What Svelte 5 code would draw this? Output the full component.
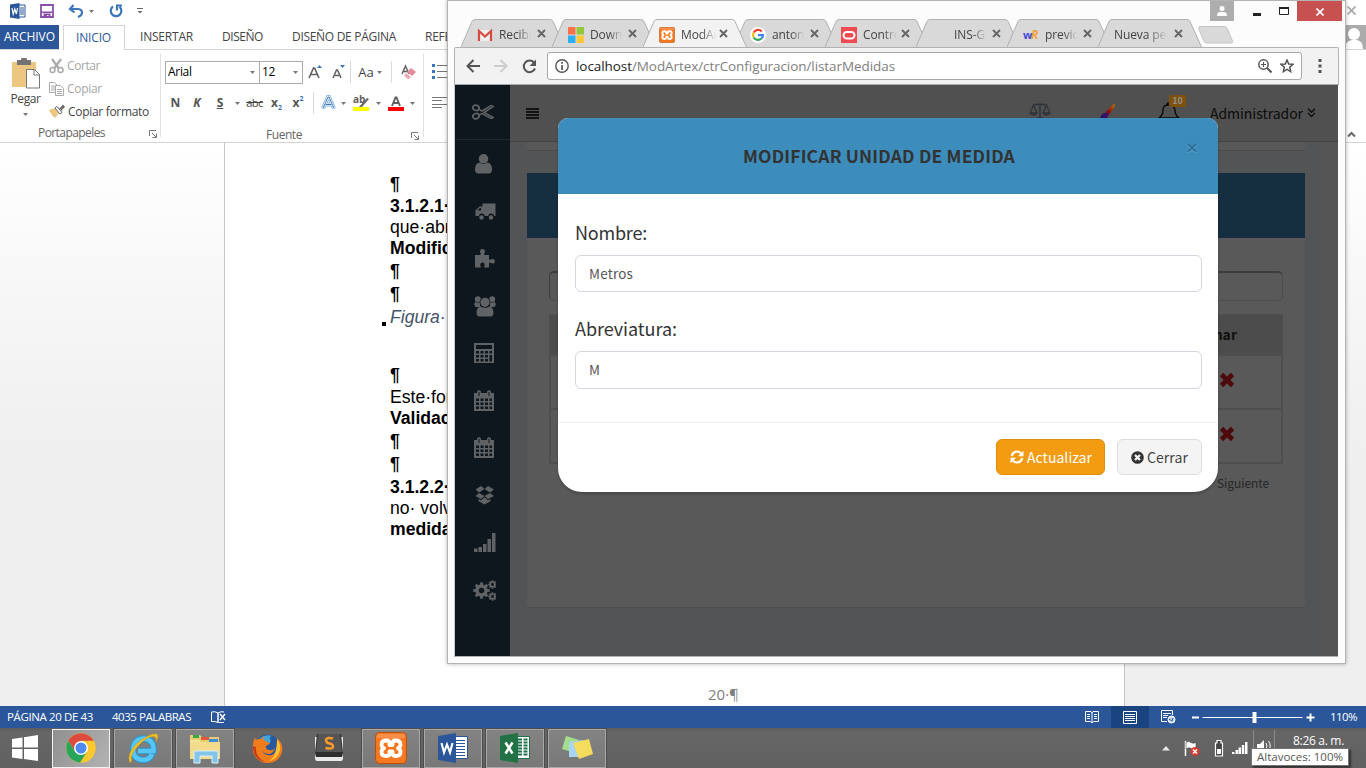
<script>
  // Spreads a label over a fixed width by adjusting its tracking.
  function fit(node, width) {
    const natural = node.getBoundingClientRect().width;
    const count = node.textContent.length;
    node.style.letterSpacing = (width - natural) / count + 'px';
  }

  const ribbonTabs = [
    { label: 'INSERTAR', gap: 15, w: 53 },
    { label: 'DISEÑO', gap: 29, w: 41 },
    { label: 'DISEÑO DE PÁGINA', gap: 29, w: 104 },
    { label: 'REFE', gap: 29, w: 26 }
  ];

  const lines = [
    { t: '¶', h: 22, k: 'b' },
    { t: '3.1.2.1·Modificar', h: 22, k: 'b' },
    { t: 'que·abre', h: 20 },
    { t: 'Modificar', h: 22, k: 'b' },
    { t: '¶', h: 24, k: 'b' },
    { t: '¶', h: 23, k: 'b' },
    { t: 'Figura·', h: 22, k: 'fig' },
    { t: '', h: 36 },
    { t: '¶', h: 22, k: 'b' },
    { t: 'Este·formulario', h: 22 },
    { t: 'Validación', h: 21, k: 'b' },
    { t: '¶', h: 24, k: 'b' },
    { t: '¶', h: 23, k: 'b' },
    { t: '3.1.2.2·Modificar', h: 22, k: 'b' },
    { t: 'no· volverá', h: 21 },
    { t: 'medida', h: 21, k: 'b' }
  ];

  const tabs = [
    { icon: 'gmail', label: 'Recibi', w: 34 },
    { icon: 'ms', label: 'Downl', w: 34 },
    { icon: 'xampp', label: 'ModAr', w: 37, active: true },
    { icon: 'google', label: 'antoni', w: 34 },
    { icon: 'oracle', label: 'Contro', w: 36 },
    { icon: 'none', label: 'INS-G', w: 34 },
    { icon: 'wr', label: 'previo', w: 34 },
    { icon: '', label: 'Nueva pes', w: 56 }
  ];

  const menu = ['user', 'truck', 'puzzle', 'users', 'calc', 'cal', 'cal', 'dropbox', 'signal', 'cogs'];
  const tasks = [
    { n: 'chrome', s: 'on' },
    { n: 'ie', s: 'open' },
    { n: 'folder', s: 'open' },
    { n: 'firefox', s: '' },
    { n: 'sublime', s: '' },
    { n: 'xampp', s: 'open' },
    { n: 'word', s: 'open' },
    { n: 'excel', s: 'open' },
    { n: 'notes', s: 'open' }
  ];
  const teeth = [0, 45, 90, 135, 180, 225, 270, 315];
</script>

{#snippet arrow(c = '#777')}
  <svg width="5" height="3" viewBox="0 0 5 3"><path d="M0 0h5L2.5 3z" fill={c} /></svg>
{/snippet}

{#snippet launcher()}
  <svg width="8" height="8" viewBox="0 0 8 8" fill="none" stroke="#777"><path d="M.5 6V.5H7M3 3l4 4M7.5 3.500V7.500H3.500" /></svg>
{/snippet}

{#snippet xampp(size)}
  <svg width={size} height={size} viewBox="0 0 32 32">
    <rect x=".5" y=".5" width="31" height="31" rx="4" fill="#f57820" stroke="#b9500f" />
    <path d="M2 2h28v4q-14 2-28 0z" fill="#f9a36a" opacity=".55" />
    <path d="M11.500 8.500q-5 0-5 4 0 2.500 2.500 3.800-2.500 1.300-2.500 3.700 0 4 5 4 3 0 3-3v-1.500h3V21q0 3 3 3 5 0 5-4 0-2.400-2.500-3.700 2.500-1.300 2.500-3.800 0-4-5-4-3 0-3 3V13h-3v-1.500q0-3-3-3z" fill="none" stroke="#fff" stroke-width="3.800" stroke-linejoin="round" />
  </svg>
{/snippet}

{#snippet cog(cx, cy, r)}
  <g transform="translate({cx} {cy})">
    {#each teeth as a}<rect x={-r * 0.22} y={-r * 1.28} width={r * 0.44} height={r * 0.5} transform="rotate({a})" fill="#606365" />{/each}
    <circle r={r * 0.7} fill="none" stroke="#606365" stroke-width={r * 0.55} />
  </g>
{/snippet}

{#snippet side(n)}
  <svg width="24" height="24" viewBox="0 0 24 24" fill="#606365">
    {#if n === 'user'}
      <circle cx="11.500" cy="6.800" r="4.800" /><path d="M7.500 10.500q4 3 8 0 4.500 1 4.500 7 0 4-3.500 4h-10Q3 21.500 3 17.500q0-6 4.500-7z" />
    {:else if n === 'truck'}
      <g transform="translate(-.5 1)"><path d="M11 3.500h13V16h-1.200a3.200 3.200 0 0 0-6.200 0h-3.200a3.200 3.200 0 0 0-6.200 0H4v-5.500l4-4h3z" /><path d="M6 10.500h3.500V8H8.300z" fill="#0e171e" /><circle cx="10" cy="17.500" r="2.200" /><circle cx="19.500" cy="17.500" r="2.200" /></g>
    {:else if n === 'puzzle'}
      <path d="M3 9h5.300q.9-1.200-.1-2.600Q7.500 3 10.500 3t2.300 3.400Q11.500 8 12.700 9H17v4.200q1 1.200 2.500 0 3.400-1 3.400 2t-3.400 2q-1.500-1.200-2.500 0V21.500h-4.500q-.8-.8.100-2Q13 16.500 10.500 16.500T8.300 19.500q1 1.200.2 2H3z" />
    {:else if n === 'users'}
      <circle cx="5.800" cy="5.300" r="3" /><circle cx="20.200" cy="5.300" r="3" /><path d="M3.500 8q2.500 1.500 5 0-1 2.500 0 5h-5q-2.500-3 0-5zM22.500 8q-2.500 1.500-5 0 1 2.500 0 5h5q2.500-3 0-5z" /><circle cx="13" cy="8.300" r="5.300" fill="#0e171e" /><circle cx="13" cy="8.300" r="4.600" /><path d="M8.500 12.500q4.500 2.500 9 0 4 1 4 6 0 4-3 4h-11q-3 0-3-4 0-5 4-6z" />
    {:else if n === 'calc'}
      <path d="M2 2h20v20H2z" /><path d="M4 4h16v4H4zM4 10h3v2.500H4zM8.500 10h3v2.500h-3zM13 10h3v2.500h-3zM17.500 10h2.500v2.500h-2.500zM4 14h3v2.500H4zM8.500 14h3v2.500h-3zM13 14h3v2.500h-3zM17.500 14H20v6.500h-2.500zM4 18h3v2.500H4zM8.500 18h3v2.500h-3zM13 18h3v2.500h-3z" fill="#0e171e" />
    {:else if n === 'cal'}
      <path d="M2 4h3V2.500Q7 0 9 2.500V4h6V2.500Q17 0 19 2.500V4h3v18H2z" /><path d="M6.500 3h1v4h-1zM16.500 3h1v4h-1zM4 9.500h3V12H4zM8.500 9.500h3V12h-3zM13 9.500h3V12h-3zM17.500 9.500H20V12h-2.500zM4 13.500h3V16H4zM8.500 13.500h3V16h-3zM13 13.500h3V16h-3zM17.500 13.500H20V16h-2.500zM4 17.500h3V20H4zM8.500 17.500h3V20h-3zM13 17.500h3V20h-3zM17.500 17.500H20V20h-2.500z" fill="#0e171e" />
    {:else if n === 'dropbox'}
      <path d="M8.500 3L12 6l-5.500 3.500L3 6.500zM15.500 3L12 6l5.500 3.500 4-3zM6.500 10L12 13l-3.500 3L3 13zM17.500 10L12 13l3.500 3 6-3zM12 14.200l3.500 3L18 16v2.200L12 21.500l-6-3.300V16l2.500 1.200z" transform="translate(.5 0)" />
    {:else if n === 'signal'}
      <path d="M2 17.500h3.500V21H2zM6.500 16H10v5H6.500zM11 13h3.500v8H11zM15.500 8H19v13h-3.500zM20 2h3.500v19H20z" />
    {:else}
      {@render cog(9.5, 12.5, 6.4)}{@render cog(20.5, 6.5, 3.4)}{@render cog(20.5, 18.5, 3.4)}
    {/if}
  </svg>
{/snippet}

<div class="desktop">
  <div class="word">
    <div class="qat">
      <svg width="16" height="16" viewBox="0 0 16 16"><path d="M8 2h7v12H8z" fill="#fff" stroke="#2b579a" /><path d="M10 5h4M10 7h4M10 9h4M10 11h4" stroke="#2b579a" /><path d="M0 1.500L9.500 0v16L0 14.500z" fill="#2b579a" /><path d="M2 5l1.200 6L4.800 6l1.600 5L7.500 5" fill="none" stroke="#fff" stroke-width="1.200" /></svg>
      <svg class="m-save" width="14" height="14" viewBox="0 0 14 14"><path d="M1 1h12v12H1z" fill="#fff" stroke="#8a4fab" stroke-width="1.800" /><path d="M1 7.500h12V9H1zM3.500 9.500h7V13h-2v-2H7v2H3.500z" fill="#8a4fab" /></svg>
      <svg class="m-undo" width="16" height="14" viewBox="0 0 16 14"><path d="M5.500 1L2 5l4.500 3.500M2.500 5H10q4 .3 4 3.500 0 3-4 4.500" fill="none" stroke="#3a76b8" stroke-width="2.200" /></svg>
      <span class="m-a">{@render arrow()}</span>
      <svg class="m-redo" width="15" height="14" viewBox="0 0 15 14"><path d="M4 2.500a5.300 5.300 0 1 0 6.500.3M8 6.500V1.500H13" fill="none" stroke="#3a76b8" stroke-width="2.200" /></svg>
      <svg class="m-more" width="6" height="6" viewBox="0 0 6 6"><path d="M0 .5h6" stroke="#666" /><path d="M.5 3h5L3 5.500z" fill="#666" /></svg>
    </div>
    <div class="rtabs">
      <div class="file"><span use:fit={51}>ARCHIVO</span></div>
      <div class="home"><span use:fit={35}>INICIO</span></div>
      <div class="rest">
        {#each ribbonTabs as t}
          <span class="rt" style="margin-left:{t.gap}px" use:fit={t.w}>{t.label}</span>
        {/each}
        <svg class="face" width="21" height="24" viewBox="0 0 21 24"><path d="M0 0h21v24H0z" fill="#ababab" /><circle cx="9" cy="9" r="6" fill="#fff" /><path d="M0 24q0-8 7-9h5q6 1 6 9z" fill="#fff" /></svg>
      </div>
    </div>
    <div class="ribbon">
      <div class="group clip">
        <div class="clipbody">
          <div class="paste">
            <svg width="30" height="32" viewBox="0 0 30 32"><path d="M1 4h24v25H1z" fill="#edc681" /><path d="M6 2h4q0-3 3-3t3 3h4v5H6z" fill="#737373" /><path d="M15.500 11.500h8l5 5V30h-13z" fill="#fff" stroke="#777" /><path d="M23 11.500V17h5.500" fill="none" stroke="#777" /></svg>
            <span use:fit={30}>Pegar</span>
            {@render arrow()}
          </div>
          <div class="cmds">
            <div class="cmd off">
              <svg width="15" height="16" viewBox="0 0 15 16" fill="none" stroke="#aaa" stroke-width="1.500"><path d="M3 1l6.500 9M12 1L5.500 10" stroke-width="2.200" /><circle cx="3.500" cy="12" r="2.500" /><circle cx="11.500" cy="12" r="2.500" /></svg>
              <span use:fit={33}>Cortar</span>
            </div>
            <div class="cmd off">
              <svg width="15" height="14" viewBox="0 0 15 14" fill="#fff" stroke="#aaa"><path d="M.5.5h5l3 3v7h-8zM2 4h4M2 6h4M2 8h4" /><path d="M6.500 3.500h5l3 3v7h-8zM8 7.500h5M8 9.500h5M8 11.500h5" /></svg>
              <span use:fit={35}>Copiar</span>
            </div>
            <div class="cmd">
              <svg width="16" height="15" viewBox="0 0 16 15"><path d="M0 6l6-2 4 5-4 5q-4-3-6-8z" fill="#edc681" /><path d="M6 4l2-1.500 5 6L11 10z" fill="#fff" stroke="#666" /><path d="M9 3l2 1 3-3.500L16 3l-3 2.500.5 2z" fill="#666" /></svg>
              <span use:fit={81}>Copiar formato</span>
            </div>
          </div>
        </div>
        <div class="gname"><span class="g1" use:fit={67}>Portapapeles</span><span class="l1">{@render launcher()}</span></div>
      </div>
      <div class="group font">
        <div class="frow">
          <div class="sel name"><span>Arial</span>{@render arrow()}</div>
          <div class="sel size"><span>12</span>{@render arrow()}</div>
          <div class="c" style="width:25px"><svg width="15" height="16" viewBox="0 0 15 16"><path d="M1 14L5.500 4h1L11 14M3 10.500h6" fill="none" stroke="#5f5f5f" stroke-width="1.600" /><path d="M9 4h5l-2.500-3z" fill="#3a76b8" /></svg></div>
          <div class="c" style="width:21px"><svg width="14" height="16" viewBox="0 0 14 16"><path d="M1 14l3.500-8h1L9 14M3 11.500h4" fill="none" stroke="#5f5f5f" stroke-width="1.500" /><path d="M8 1h5l-2.500 3z" fill="#3a76b8" /></svg></div>
          <div class="vs"></div>
          <div class="c big" style="width:26px">Aa</div>
          <div class="c" style="width:5px">{@render arrow()}</div>
          <div class="vs vs2"></div>
          <div class="c" style="width:24px"><svg width="15" height="16" viewBox="0 0 15 16"><path d="M1 10L4.500 2 8 10M2 7.500h5" fill="none" stroke="#5f5f5f" stroke-width="1.400" /><path d="M10 4l5 4-4 4-5-4z" fill="#e58a9b" /><path d="M5 9l5 4-3 2.500-4-4z" fill="#f0a9b6" /></svg></div>
        </div>
        <div class="frow r2">
          <div class="c b" style="width:21px">N</div>
          <div class="c b i" style="width:22px">K</div>
          <div class="c b u" style="width:24px">S</div>
          <div class="c" style="width:11px">{@render arrow()}</div>
          <div class="c abc" style="width:23px"><s>abc</s></div>
          <div class="c b" style="width:21px">x<sub>2</sub></div>
          <div class="c b" style="width:22px">x<sup>2</sup></div>
          <div class="c" style="width:8px"><i class="bar"></i></div>
          <div class="c" style="width:23px"><svg width="15" height="16" viewBox="0 0 15 16" fill="none"><path d="M2 13.500L7 2h1l5 11.500M4.500 9.500h6" stroke="#8db7e2" stroke-width="4" /><path d="M2 13.500L7 2h1l5 11.500M4.500 9.500h6" stroke="#fff" stroke-width="2" /><path d="M2 13.500L7 2h1l5 11.500M4.500 9.500h6" stroke="#2b6cb0" stroke-width=".9" /></svg></div>
          <div class="c" style="width:7px">{@render arrow()}</div>
          <div class="c" style="width:28px"><svg class="vis" width="17" height="17" viewBox="0 0 17 17"><text x="0" y="8" font-size="10" font-weight="700" font-family="Open Sans" fill="#5f5f5f">ab</text><path d="M14 3l2 1-7 8-4 1z" fill="#6a6a6a" /><path d="M0 12h16v4H0z" fill="#ff0" /></svg></div>
          <div class="c" style="width:7px">{@render arrow()}</div>
          <div class="c" style="width:27px"><svg width="16" height="17" viewBox="0 0 16 17"><path d="M4 11L7.500 2.500h1L12 11M5.500 8h5" fill="none" stroke="#5f5f5f" stroke-width="1.900" /><path d="M0 12h16v4H0z" fill="red" /></svg></div>
          <div class="c" style="width:7px">{@render arrow()}</div>
        </div>
        <div class="gname"><span class="g2" use:fit={36}>Fuente</span><span class="l2">{@render launcher()}</span></div>
      </div>
      <div class="group para">
        <svg width="16" height="50" viewBox="0 0 16 50"><path d="M0 1h3v3H0zM0 7h3v3H0zM0 13h3v3H0z" fill="#3a76b8" /><path d="M5 2.500h11M5 8.500h11M5 14.500h11M0 34.500h16M0 37.500h10M0 41.500h16M0 44.500h10" stroke="#777" /></svg>
      </div>
      <svg class="collapse" width="9" height="7" viewBox="0 0 9 7"><path d="M1 5.500l3.500-3.500L8 5.500" fill="none" stroke="#666" stroke-width="2" /></svg>
    </div>
    <div class="canvas">
      <div class="sheet">
        {#each lines as l}
          <div class="ln {l.k ?? ''}" style="height:{l.h}px;line-height:{l.h}px">{l.t}</div>
        {/each}
        <div class="pageno">20·¶</div>
      </div>
    </div>
    <div class="status">
      <span class="s1" use:fit={86}>PÁGINA 20 DE 43</span>
      <span class="s2" use:fit={79}>4035 PALABRAS</span>
      <svg class="s3" width="15" height="13" viewBox="0 0 15 13" fill="none" stroke="#fff"><path d="M7 2q-3-2-6.500-1v9.500Q4 10 7 11.500zM7 2q3-2 6-1M7 12V2M8 11.500h5" /><path d="M9 3l5 6M14 3L9 9" stroke-width="1.400" /></svg>
      <div class="views">
        <div class="v"><svg width="14" height="13" viewBox="0 0 14 13" fill="none" stroke="#fff"><path d="M.5.5H6L7 2l1-1.500h5.500v10H8.500L7 12l-1.500-1.500h-5zM7 2v10M2 3.500h3M2 5.500h3M2 7.500h3M9 3.500h3M9 5.500h3M9 7.500h3" /></svg></div>
        <div class="v cur"><svg width="14" height="13" viewBox="0 0 14 13" fill="none" stroke="#fff"><path d="M.5.5h13v12H.5zM2 3.500h10M2 5.500h10M2 7.500h10M2 9.500h10" /></svg></div>
        <div class="v"><svg width="15" height="14" viewBox="0 0 15 14" fill="none" stroke="#fff"><path d="M11.500 5V.5H.5v11H6M2 3.500h8M2 5.500h5M2 7.500h4" /><circle cx="10.500" cy="9.500" r="3.500" fill="#c9d8ee" /><path d="M8 9l3 2 1-3" stroke="#2b579a" /></svg></div>
      </div>
      <svg class="zoom" width="124" height="12" viewBox="0 0 124 12"><path d="M0 6.500h7" stroke="#fff" stroke-width="2" /><path d="M10.500 6.500h100" stroke="#fff" /><path d="M60.500 1h4v11h-4z" fill="#fff" /><path d="M114.500 6.500h8M118.500 2.500v8" stroke="#fff" stroke-width="2" /></svg>
      <span class="pct" use:fit={27}>110%</span>
    </div>
  </div>

  <div class="taskbar">
    <svg class="start" width="28" height="26" viewBox="0 0 28 26"><path d="M1 4l10.500-1.500v10H1zM13 2.300L27 0v12.500H13zM1 14h10.500v10L1 22.500zM13 14h14v12l-14-2z" fill="#fff" /></svg>
    <div class="tasks">
      {#each tasks as t}
        <div class="task {t.s}">
          {#if t.n === 'xampp'}
            {@render xampp(32)}
          {:else}
            <svg width="32" height="32" viewBox="0 0 32 32">
              {#if t.n === 'chrome'}
                <circle cx="16" cy="16" r="14.700" fill="#fbc92e" />
                <path d="M3.300 8.600A14.700 14.700 0 0 1 28.700 8.700H16L10 19.500z" fill="#dc4b3e" />
                <path d="M3.300 8.600A14.700 14.700 0 0 0 15 30.700L22 19.500H10z" fill="#27a65a" />
                <circle cx="16" cy="16" r="7" fill="#fff" /><circle cx="16" cy="16" r="5.500" fill="#4f8af0" />
              {:else if t.n === 'ie'}
                <path d="M25 22q-2 6-9 6Q6 27 6 17.500 7 7 17 6.500 27 7.500 26.500 19H11" fill="none" stroke="#2b93d1" stroke-width="6.500" />
                <path d="M25 22q-2 6-9 6Q6 27 6 17.500 7 7 17 6.500 27 7.500 26.500 19H11" fill="none" stroke="#58c6f2" stroke-width="4.500" />
                <path d="M3 31Q-1 22 10 11.500 22 1 30 2q2 2-1 8 1-5-2-5.500Q20 4 11 14 2 24 5 28z" fill="#f2c321" stroke="#cf9b14" stroke-width=".5" />
              {:else if t.n === 'folder'}
                <path d="M1 3h10l2 2h17v22H1z" fill="#eacb6e" /><path d="M4 3h6v3H4z" fill="#37a849" /><path d="M12 5h8v3h-8z" fill="#e3583c" /><path d="M20 7h9v3h-9z" fill="#3c8ed6" /><path d="M1 8h9l2 2h19v17H1z" fill="#f7e39b" /><path d="M1 10h30v17H1z" fill="#f3db8c" /><path d="M5 31V19h24v12h-6v-7H11v7z" fill="#83c4e8" stroke="#d9f1fb" />
              {:else if t.n === 'firefox'}
                <circle cx="16.500" cy="15" r="12.500" fill="#28599e" /><path d="M9 6q6-4 12-2-3 1-2 3 2 3-2 5z" fill="#42a5da" />
                <path d="M4 5q0 2 1 3 3-2 6-1 0-2 2-3-1 4 1 5l5 2q-1 2-4 3-1 3 3 4 4 1 6-2-1 5-6 6-7 0-8-7 2 10 11 8 8-3 5-17 8 7 4 17-5 9-15 8-10-2-13-11-1-9 2-15z" fill="#f07c1c" /><path d="M26 7q6 8 1 16-3 5-9 6 8-5 8-22z" fill="#fbc236" /><path d="M2 14q0 14 12 16-10-5-9-15z" fill="#c93a1a" />
              {:else if t.n === 'sublime'}
                <path d="M2 5h28v21q0 3-2 3H4q-2 0-2-3z" fill="#e9e9e9" /><path d="M4 2h24l2 19-1 4H3l-1-4z" fill="#2e2e2e" /><path d="M5 2h22l2 18H3z" fill="#555" /><path d="M20 6.500Q13 5 13 8t3.500 3.500T20 14.500Q20 17.500 12.500 16" fill="none" stroke="#ff9b2b" stroke-width="2.500" />
              {:else if t.n === 'word' || t.n === 'excel'}
                <path d="M16 4.500h14.500v22H16z" fill="#fff" stroke={t.n === 'word' ? '#2b579a' : '#217346'} />
                {#if t.n === 'word'}
                  <path d="M18 8.500h10M18 11.500h10M18 14.500h10M18 17.500h10M18 20.500h10M18 23.500h10" stroke="#2b579a" stroke-width="1.200" />
                {:else}
                  <path d="M19 7.500h4M24.500 7.500h4M19 10.500h4M24.500 10.500h4M19 13.500h4M24.500 13.500h4M19 16.500h4M24.500 16.500h4M19 19.500h4M24.500 19.500h4M19 22.500h4M24.500 22.500h4" stroke="#217346" stroke-width="1.800" />
                {/if}
                <path d="M1 4L19 1v30L1 28z" fill={t.n === 'word' ? '#2b579a' : '#217346'} />
                {#if t.n === 'word'}
                  <path d="M4.500 11L7 20.500 10 12.500 13 20.500 15.500 11" fill="none" stroke="#fff" stroke-width="2.100" />
                {:else}
                  <path d="M6.500 10.500l7 11M13.500 10.500l-7 11" stroke="#fff" stroke-width="2.500" />
                {/if}
              {:else}
                <path d="M5 4l13 4-4 13-13-4z" fill="#a4dd8d" /><path d="M8 10l14-2 1 17H8z" fill="#a9d5f5" /><path d="M12 11l16-4 4 15-14 5z" fill="#f5dc5c" />
              {/if}
            </svg>
          {/if}
        </div>
      {/each}
    </div>
    <div class="tray">
      <svg width="8" height="5" viewBox="0 0 8 5"><path d="M0 4.500h8L4 0z" fill="#e8e8e8" /></svg>
      <svg class="t-flag" width="17" height="17" viewBox="0 0 17 17"><path d="M1.500 1v15" stroke="#fff" stroke-width="1.500" /><path d="M2 2q3-1 5 .5t5 0V9q-3 1-5-.5T2 9z" fill="#fff" stroke="#444" stroke-width=".6" /><circle cx="11" cy="11.500" r="4.500" fill="#dc3b31" /><path d="M9 9.500l4 4M13 9.500l-4 4" stroke="#fff" stroke-width="1.500" /></svg>
      <svg class="t-bat" width="10" height="17" viewBox="0 0 10 17"><path d="M3 .5h4V3h1.500v13h-7V3H3z" fill="#444" stroke="#fff" stroke-width="1.200" /><path d="M3 9h4v5H3z" fill="#fff" /></svg>
      <svg class="t-net" width="16" height="14" viewBox="0 0 16 14"><path d="M0 11h2.500v2H0zM3.500 9H6v4H3.500zM6.500 6.500H9V13H6.500zM9.800 4h2.500v9H9.800zM13 1h2.500v12H13z" fill="#fff" /></svg>
      <div class="spk"><svg width="16" height="12" viewBox="0 0 16 12"><path d="M1 4h3l4-4v12L4 8H1z" fill="#fff" /><path d="M10 3q2 3 0 6M12.500 1q3.500 5 0 10" fill="none" stroke="#fff" /></svg></div>
      <span class="clock" use:fit={51}>8:26 a. m.</span>
    </div>
  </div>

  <div class="browser">
    <div class="strip">
      <div class="tabs">
        {#each tabs as t}
          <div class="tab" class:active={t.active}>
            <svg class="shape" width="104" height="29" viewBox="0 0 104 29"><path d="M0 28L11 2.500Q12 .5 14 .5h75q2 0 3 2L103.500 28" fill={t.active ? '#f2f2f2' : '#d9d9d9'} stroke="#b1b1b1" /></svg>
            <div class="tabin">
              {#if t.icon === 'xampp'}
                {@render xampp(16)}
              {:else if t.icon}
                <svg width="16" height="16" viewBox="0 0 16 16">
                  {#if t.icon === 'gmail'}
                    <path d="M1 3h14v11H1z" fill="#eee" /><path d="M2 14V4l6 5.500L14 4v10" fill="none" stroke="#d54b3d" stroke-width="2.200" />
                  {:else if t.icon === 'ms'}
                    <path d="M0 0h7.500v7.500H0z" fill="#f8714b" /><path d="M8.500 0H16v7.500H8.500z" fill="#93c83d" /><path d="M0 8.500h7.500V16H0z" fill="#2db1ee" /><path d="M8.500 8.500H16V16H8.500z" fill="#fdc73a" />
                  {:else if t.icon === 'google'}
                    <circle cx="8" cy="8" r="8" fill="#fff" /><g fill="none" stroke-width="2.200"><path d="M11.800 4.500A5 5 0 0 0 3.700 5.500" stroke="#ea4335" /><path d="M3.700 5.500a5 5 0 0 0 0 5" stroke="#fbbc05" /><path d="M3.700 10.500a5 5 0 0 0 7.800 1" stroke="#34a853" /><path d="M11.500 11.500A5 5 0 0 0 13 8.100H8" stroke="#4285f4" /></g>
                  {:else if t.icon === 'oracle'}
                    <path d="M0 0h16v16H0z" fill="#ef4b50" /><rect x="2.500" y="5" width="11" height="6.500" rx="3.200" fill="none" stroke="#fff" stroke-width="2" />
                  {:else if t.icon === 'wr'}
                    <text x="0" y="12" font-size="11" font-weight="700" font-family="Open Sans" fill="#4447d6">w</text><text x="8" y="12" font-size="12" font-weight="700" font-style="italic" font-family="Open Sans" fill="#efa33a">R</text>
                  {/if}
                </svg>
              {/if}
              <span class="tl" style="width:{t.w - 2}px;margin-left:{t.icon ? 6 : 0}px">{t.label}</span>
              <svg class="tx" width="9" height="9" viewBox="0 0 9 9"><path d="M1 1l7 7M8 1L1 8" stroke="#666" stroke-width="1.900" /></svg>
            </div>
          </div>
        {/each}
      </div>
      <svg class="newtab" width="36" height="18" viewBox="0 0 36 18"><path d="M1.500.5h25q2 0 3 2.500l5 12q.8 2-1.500 2H9q-2.500 0-3.500-2.500L1 3Q0 .5 1.500.5z" fill="#d9d9d9" stroke="#c4c4c4" /></svg>
      <div class="wbtns">
        <div class="who"><svg width="10" height="10" viewBox="0 0 10 10" fill="#fff"><circle cx="5" cy="2.500" r="2.500" /><path d="M0 10q0-4 3-4h4q3 0 3 4z" /></svg></div>
        <svg class="min" width="8" height="3" viewBox="0 0 8 3"><path d="M0 0h8v3H0z" fill="#222" /></svg>
        <svg class="max" width="10" height="8" viewBox="0 0 10 8"><path d="M.5 1h9v6.500h-9z" fill="none" stroke="#222" /><path d="M0 0h10v2H0z" fill="#222" /></svg>
        <div class="cls"><svg width="8" height="8" viewBox="0 0 8 8"><path d="M.5.500l7 7M7.500.500l-7 7" stroke="#fff" stroke-width="1.600" /></svg></div>
      </div>
    </div>
    <div class="bar2">
      <svg class="nb" width="14" height="14" viewBox="0 0 14 14" fill="none" stroke="#555" stroke-width="2"><path d="M14 7H1.500M7.500 1l-6 6 6 6" /></svg>
      <svg class="nf" width="14" height="14" viewBox="0 0 14 14" fill="none" stroke="#ccc" stroke-width="2"><path d="M0 7h12.500M6.500 1l6 6-6 6" /></svg>
      <svg class="nr" width="15" height="15" viewBox="0 0 15 15"><path d="M12 3.500A5.800 5.800 0 1 0 13 9.500" fill="none" stroke="#555" stroke-width="2" /><path d="M14 .5V7H7.500z" fill="#555" /></svg>
      <div class="omni">
        <svg width="14" height="14" viewBox="0 0 14 14"><circle cx="7" cy="7" r="6.200" fill="none" stroke="#555" stroke-width="1.400" /><path d="M6.200 3h1.700v1.700H6.200zM6.200 6h1.700v5H6.200z" fill="#555" /></svg>
        <span class="url" use:fit={319}>localhost<em>/ModArtex/ctrConfiguracion/listarMedidas</em></span>
        <svg class="mag" width="14" height="14" viewBox="0 0 14 14" fill="none" stroke="#555"><circle cx="5.500" cy="5.500" r="4.700" stroke-width="1.500" /><path d="M3 5.500h5M5.500 3v5" /><path d="M9 9l4.500 4.500" stroke-width="2" /></svg>
        <svg width="14" height="14" viewBox="0 0 14 14"><path d="M7 1l1.700 4 4.300.3-3.300 2.900 1 4.400L7 10.300l-3.700 2.300 1-4.400L1 5.300 5.300 5z" fill="none" stroke="#555" stroke-width="1.500" /></svg>
      </div>
      <svg class="dots" width="4" height="14" viewBox="0 0 4 14" fill="#555"><path d="M.5 0h3v3h-3zM.5 5.500h3v3h-3zM.5 11h3v3h-3z" /></svg>
    </div>
    <div class="page">
      <div class="side">
        <div class="logo"><svg width="22" height="16" viewBox="0 0 22 16" fill="none" stroke="#606365" stroke-width="1.700"><ellipse cx="4" cy="3.800" rx="3.200" ry="2.600" transform="rotate(20 4 3.800)" /><ellipse cx="4" cy="12.200" rx="3.200" ry="2.600" transform="rotate(-20 4 12.200)" /><path d="M7 5.200l3 1.800L19 1.500l2.500 1L12 8.500 21.500 13.500l-2.500 1L10 9.500 7 11" stroke-width="1.500" /></svg></div>
        {#each menu as m}
          <div class="mi">{@render side(m)}</div>
        {/each}
      </div>
      <div class="main">
        <div class="top">
          <svg width="13" height="11" viewBox="0 0 13 11"><path d="M0 1h13M0 4h13M0 7h13M0 10h13" stroke="#000" stroke-width="1.500" /></svg>
          <svg class="bal" width="22" height="17" viewBox="0 0 22 17" fill="none" stroke="#30323a" stroke-width="1.300"><path d="M4 2.500h14M11 1v15M7 16h8M4.500 3L1 11h7zM17.500 3L14 11h7zM1 11q3.500 4 7 0M14 11q3.500 4 7 0" /></svg>
          <svg class="brush" width="17" height="18" viewBox="0 0 17 18"><defs><linearGradient id="br" x1="0" y1="1" x2="1" y2="0"><stop offset="0" stop-color="#1a1560" /><stop offset=".4" stop-color="#3a1065" /><stop offset=".55" stop-color="#8a1010" /><stop offset="1" stop-color="#c07010" /></linearGradient></defs><path d="M16 1q1 2-7 12-1 4-5 4-3 0-4-2 2 0 2-2 1-3 4-3Q14 0 16 1z" fill="url(#br)" /></svg>
          <div class="bell">
            <svg width="22" height="20" viewBox="0 0 22 20" fill="none" stroke="#0a0a0a" stroke-width="1.400"><path d="M1 16q4-3 4-8 0-5 5.500-5T17 8q0 5 4 8zM9 3q0-2 1.500-2T12 3" /></svg>
            <b>10</b>
          </div>
          <span class="adm" use:fit={93}>Administrador</span>
          <svg width="9" height="10" viewBox="0 0 9 10" fill="none" stroke="#0c0c0c" stroke-width="1.300"><path d="M1 .8l3.500 3.500L8 .8M1 5l3.500 3.500L8 5" /></svg>
        </div>
        <div class="content">
          <div class="prev"></div>
          <div class="box">
            <div class="bhead"></div>
            <div class="search"></div>
            <div class="table">
              <div class="th">Eliminar</div>
              <div class="td"><svg width="16" height="16" viewBox="0 0 16 16"><path d="M2.500 2.500l11 11M13.500 2.500l-11 11" stroke="#4d0a0c" stroke-width="4.600" /></svg></div>
              <div class="td"><svg width="16" height="16" viewBox="0 0 16 16"><path d="M2.500 2.500l11 11M13.500 2.500l-11 11" stroke="#4d0a0c" stroke-width="4.600" /></svg></div>
            </div>
            <div class="pager"><span use:fit={52}>Siguiente</span></div>
          </div>
        </div>
      </div>
      <div class="modal">
        <div class="mh">
          <span class="mt" use:fit={272}>MODIFICAR UNIDAD DE MEDIDA</span>
          <svg class="mx" width="10" height="10" viewBox="0 0 10 10"><path d="M1 2l8 8M9 2l-8 8" stroke="#70b4dc" stroke-width="1.500" /><path d="M1 1l8 8M9 1L1 9" stroke="#2e7096" stroke-width="1.800" /></svg>
        </div>
        <div class="mb">
          <div class="lb"><span use:fit={72}>Nombre:</span></div>
          <div class="in"><span use:fit={44}>Metros</span></div>
          <div class="lb l2b"><span use:fit={102}>Abreviatura:</span></div>
          <div class="in i2"><span>M</span></div>
        </div>
        <div class="mf">
          <div class="btn warn"><svg width="14" height="14" viewBox="0 0 14 14"><path d="M1.800 6A5.300 5.300 0 0 1 11.500 4M12.200 8A5.300 5.300 0 0 1 2.500 10" fill="none" stroke="#fff" stroke-width="2.200" /><path d="M13.500.8v5.400H8zM.5 13.200V7.800H6z" fill="#fff" /></svg><span use:fit={65}>Actualizar</span></div>
          <div class="btn def"><svg width="13" height="13" viewBox="0 0 13 13"><circle cx="6.500" cy="6.500" r="6.300" fill="#333" /><path d="M4 4l5 5M9 4L4 9" stroke="#f4f4f4" stroke-width="2.200" /></svg><span use:fit={41}>Cerrar</span></div>
        </div>
      </div>
    </div>
  </div>
  <svg class="wclose" width="9" height="9" viewBox="0 0 9 9"><path d="M.5.5l8 8M8.500.5l-8 8" stroke="#aaa" stroke-width="1.800" /></svg>
  <div class="tip"><span use:fit={86}>Altavoces: 100%</span></div>
</div>

<style>
  :global(body) { overflow: hidden; }
  .desktop { position: relative; width: 1366px; height: 768px; overflow: hidden; display: flex; flex-direction: column; font: 12px/16px "Open Sans", sans-serif; color: #444; background: #fff; }
  .desktop * { box-sizing: border-box; }
  svg { display: block; flex: none; }
  .vis { overflow: visible; }
  span { white-space: nowrap; display: inline-block; flex: none; }
  .word { display: flex; flex-direction: column; height: 728px; flex: none; }
  .qat { height: 25px; display: flex; align-items: center; padding: 0 0 3px 10px; flex: none; }
  .m-save { margin-left: 14px; } .m-undo { margin-left: 14px; } .m-a { margin-left: 5px; } .m-redo { margin-left: 15px; } .m-more { margin-left: 13px; }
  .rtabs { display: flex; height: 25px; flex: none; line-height: 24px; }
  .file { width: 59px; background: #2b579a; color: #fff; padding-left: 4px; border-bottom: 1px solid #d4d4d4; }
  .home { width: 62px; margin-left: 4px; border: 1px solid #d4d4d4; border-bottom: 0; color: #2b579a; padding-left: 12px; line-height: 23px; }
  .rest { flex: 1; display: flex; border-bottom: 1px solid #d4d4d4; }
  .rest .face { margin-left: auto; }
  .ribbon { height: 93px; flex: none; display: flex; border-bottom: 1px solid #d4d4d4; }
  .group { display: flex; flex-direction: column; margin: 4px 0 5px; border-right: 1px solid #e1e1e1; }
  .clip { width: 161px; }
  .clipbody { display: flex; height: 71px; }
  .paste { width: 49px; display: flex; flex-direction: column; align-items: center; padding: 4px 0 0 2px; }
  .paste svg:last-child { margin-top: 6px; }
  .paste span { margin-top: 1px; }
  .cmds { display: flex; flex-direction: column; }
  .cmd { height: 23px; display: flex; align-items: center; gap: 3px; }
  .off { color: #a6a6a6; }
  .gname { display: flex; align-items: center; height: 18px; margin-top: 2px; color: #666; }
  .g1 { margin-left: 38px; } .l1 { margin-left: 44px; padding-top: 2px; }
  .g2 { margin-left: 101px; } .l2 { margin-left: 109px; padding-top: 2px; }
  .font { width: 263px; padding-left: 4px; }
  .frow { display: flex; height: 22px; margin-top: 7px; align-items: center; }
  .r2 { margin-top: 9px; height: 22px; margin-bottom: 11px; }
  .c { display: flex; align-items: center; justify-content: center; flex: none; }
  .sel { height: 23px; border: 1px solid #ababab; display: flex; align-items: center; justify-content: space-between; padding: 0 4px 0 2px; color: #000; flex: none; letter-spacing: -.3px; }
  .name { width: 95px; } .size { width: 44px; margin-left: -1px; }
  .vs { width: 1px; height: 22px; background: #dcdcdc; margin-left: 1px; }
  .vs2 { margin: 0 4px 0 9px; }
  .big { font-size: 13px; padding-left: 4px; }
  .b { font-weight: 700; font-size: 12px; color: #555; }
  .i { font-style: italic; } .u { text-decoration: underline; }
  .abc { font-size: 11px; letter-spacing: -.5px; }
  sub, sup { font-size: 7px; line-height: 8px; color: #3a76b8; } sub { margin-top: 9px; } sup { margin-bottom: 9px; }
  .bar { width: 1px; height: 22px; background: #dcdcdc; }
  .para { padding: 9px 0 0 8px; border: 0; }
  .collapse { margin: 81px 10px 0 auto; }
  .canvas { flex: 1; background: linear-gradient(#fff, #f0f0f0 50%, #efefef); display: flex; padding-left: 224px; min-height: 0; }
  .sheet { width: 901px; background: #fff; border: solid #c6c6c6; border-width: 0 1px; padding: 30px 0 0 165px; font: 17.6px "Liberation Sans", sans-serif; color: #000; display: flex; flex-direction: column; }
  .ln { white-space: nowrap; flex: none; }
  .ln.b { font-weight: 700; font-size: 17.6px; color: #000; }
  .fig { font-style: italic; color: #44546a; }
  .fig::before { content: ""; position: absolute; width: 4px; height: 4px; margin: 16px 0 0 -8px; background: #000; }
  .pageno { font: 15px/20px "Open Sans", sans-serif; color: #7f7f7f; margin: 144px 0 0 318px; }
  .status { height: 22px; flex: none; background: #2b579a; color: #fff; display: flex; align-items: center; font-size: 11.500px; }
  .s1 { margin-left: 7px; } .s2 { margin-left: 19px; } .s3 { margin-left: 20px; }
  .views { display: flex; margin-left: auto; height: 22px; }
  .v { width: 38px; display: flex; align-items: center; justify-content: center; } .cur { background: #1a4480; }
  .zoom { margin-left: 5px; } .pct { margin: 0 9px 0 14px; }
  .taskbar { height: 40px; flex: none; background: linear-gradient(#5d5d5d, #666 10%, #606060); display: flex; align-items: center; }
  .start { margin-left: 11px; }
  .tasks { display: flex; gap: 4px; margin-left: 12.500px; }
  .task { width: 58px; height: 39px; display: flex; align-items: center; justify-content: center; border: 1px solid transparent; }
  .open { background: linear-gradient(#838383, #787878); border-color: #a8a8a8; outline: 1px solid #4d4d4d; outline-offset: 0; }
  .on { background: linear-gradient(120deg, #8f8f8f, #b3b3b3); border-color: #f2f2f2; }
  .tray { margin-left: auto; display: flex; align-items: center; color: #fff; }
  .t-flag { margin-left: 14px; } .t-bat { margin-left: 13px; } .t-net { margin-left: 8px; }
  .spk { margin: 0 0 0 5px; width: 22px; height: 36px; border: solid #8a8a8a; border-width: 0 1px; display: flex; justify-content: center; align-items: center; padding-bottom: 4px; }
  .clock { margin: -14px 22px 0 18px; }
  .tip { position: absolute; left: 1251px; top: 748px; width: 98px; height: 18px; background: #fff; border: 1px solid #767676; box-shadow: 2px 2px 2px rgba(0,0,0,.5); padding-left: 5px; color: #575757; font-size: 11.500px; }
  .wclose { position: absolute; left: 1347px; top: 6px; clip-path: inset(0); }

  .browser { position: absolute; left: 447px; top: 0; width: 899px; height: 664px; background: #fcfcfc; border: 1px solid #b4b4b4; box-shadow: 0 0 4px rgba(0,0,0,.3); padding: 0 6px 6px; display: flex; flex-direction: column; clip-path: inset(0 -5px -5px -5px); }
  .strip { height: 46px; display: flex; align-items: flex-end; flex: none; }
  .tabs { display: flex; padding-left: 7px; }
  .tab { position: relative; display: grid; width: 104px; height: 29px; margin-right: -13px; margin-bottom: -1px; flex: none; }
  .tab > * { grid-area: 1 / 1; }
  .active { z-index: 2; }
  .tabin { display: flex; align-items: center; padding: 2px 0 0 16px; z-index: 1; }
  .tl { overflow: hidden; color: #444; flex: none; -webkit-mask-image: linear-gradient(90deg, #000 60%, transparent); mask-image: linear-gradient(90deg, #000 60%, transparent); letter-spacing: -.1px; }
  .tx { position: absolute; left: 76px; top: 10px; }
  .newtab { margin: 0 -30px 3px 9px; }
  .wbtns { margin-left: auto; align-self: flex-start; display: flex; align-items: flex-start; margin-right: -3px; }
  .who { width: 24px; height: 20px; background: #adadad; display: flex; align-items: center; justify-content: center; }
  .min { margin: 12px 0 0 19px; } .max { margin: 6px 0 0 18px; }
  .cls { width: 45px; height: 20px; background: #c75050; margin-left: 8px; display: flex; align-items: center; justify-content: center; padding-top: 2px; }
  .bar2 { height: 38px; flex: none; background: #f2f2f2; border: solid #b1b1b1; border-width: 1px 1px 0; border-bottom: 1px solid #a9a9a9; display: flex; align-items: center; border-radius: 2px 2px 0 0; }
  .nb { margin-left: 11px; } .nf { margin-left: 14px; } .nr { margin-left: 14px; }
  .omni { width: 755px; height: 28px; background: #fff; border: 1px solid #a8a8a8; border-radius: 3px; margin-left: 10px; display: flex; align-items: center; padding-left: 7px; }
  .url { margin-left: 7px; font-size: 13.500px; color: #222; } .url em { font-style: normal; color: #808080; }
  .mag { margin-left: 363px; margin-right: 8px; }
  .dots { margin-left: 16px; }
  .page { flex: 1; position: relative; display: flex; min-height: 0; margin: 0 1px 0 0; border-left: 1px solid #c9c9c9; border-bottom: 1px solid #b1b1b1; font-family: "Noto Sans CJK SC", sans-serif; }
  .side { width: 55px; background: #0e171e; display: flex; flex-direction: column; flex: none; }
  .logo { height: 55px; border-bottom: 1px solid #1b2832; display: flex; align-items: center; padding-left: 17px; flex: none; }
  .mi { height: 47.400px; display: flex; align-items: center; padding-left: 17px; flex: none; }
  .main { flex: 1; display: flex; flex-direction: column; background: #525456; min-width: 0; }
  .top { height: 57px; flex: none; background: #505050; border-bottom: 1px solid #434343; display: flex; align-items: center; padding-left: 16px; }
  .bal { margin-left: 490px; margin-top: -6px; } .brush { margin-left: 48px; margin-right: 42px; margin-top: -2px; }
  .bell { position: relative; width: 55px; margin-top: -2px; }
  .bell b { position: absolute; left: 11px; top: -7px; width: 17px; height: 12px; border-radius: 2px; background: #7e510a; color: #8f8f8f; font-size: 9px; line-height: 12px; text-align: center; }
  .adm { color: #0c0c0c; font-size: 14px; margin-left: -3px; margin-right: 4px; }
  .content { flex: 1; border-right: 16px solid #555; padding: 0 17px; display: flex; flex-direction: column; }
  .prev { height: 9px; background: #595959; border-bottom: 1px solid #4b4b4b; border-radius: 0 0 3px 3px; flex: none; }
  .box { margin-top: 22px; height: 435px; background: #595959; border-bottom: 1px solid #4d4d4d; border-radius: 0 0 3px 3px; display: flex; flex-direction: column; }
  .bhead { height: 65px; background: #162f40; flex: none; }
  .search { margin: 33px 22px 13px; height: 30px; border: 1px solid #4a4c4e; border-top: 2px solid #3d3d3d; border-left-color: #3d3d3d; border-radius: 5px; flex: none; }
  .table { margin: 0 22px; border: 2px solid #4e4e4e; flex: none; }
  .th { height: 38px; background: #4c4c4c; text-align: right; padding-right: 44px; font-weight: 700; font-size: 14px; line-height: 36px; color: #111; }
  .td { height: 54px; border-top: 2px solid #4e4e4e; display: flex; align-items: center; justify-content: flex-end; padding: 0 46px 4px 0; }
  .pager { color: #262626; font-size: 12px; padding: 11px 36px 0 0; text-align: right; }
  .modal { position: absolute; left: 103px; top: 33px; width: 660px; height: 374px; background: #fff; border-radius: 10px 10px 24px 24px; overflow: hidden; box-shadow: 0 2px 3px rgba(0,0,0,.2); color: #333; display: flex; flex-direction: column; }
  .mh { height: 76px; background: #3c8dbc; display: flex; align-items: center; padding-left: 185px; flex: none; }
  .mt { font-weight: 700; font-size: 17.500px; line-height: 24px; color: #333; } .mx { margin: -17px 0 0 172px; }
  .mb { height: 228px; padding: 23px 16px 0 17px; flex: none; }
  .lb { font-size: 18px; line-height: 30px; height: 38px; } .l2b { margin-top: 21px; }
  .in { height: 37px; border: 1px solid #d2d6de; border-radius: 6px; padding-left: 13px; font-size: 13.500px; line-height: 35px; color: #555; }
  .i2 { height: 38px; }
  .mf { border-top: 1px solid #f0f0f0; padding: 16px 16px 0; display: flex; justify-content: flex-end; gap: 12px; }
  .btn { height: 36px; border-radius: 6px; display: flex; align-items: center; gap: 3px; font-size: 14px; border: 1px solid; padding-left: 13px; }
  .warn { width: 109px; background: #f39c12; border-color: #e08e0b; color: #fff; } .def { width: 85px; background: #f4f4f4; border-color: #ddd; color: #444; }
</style>
